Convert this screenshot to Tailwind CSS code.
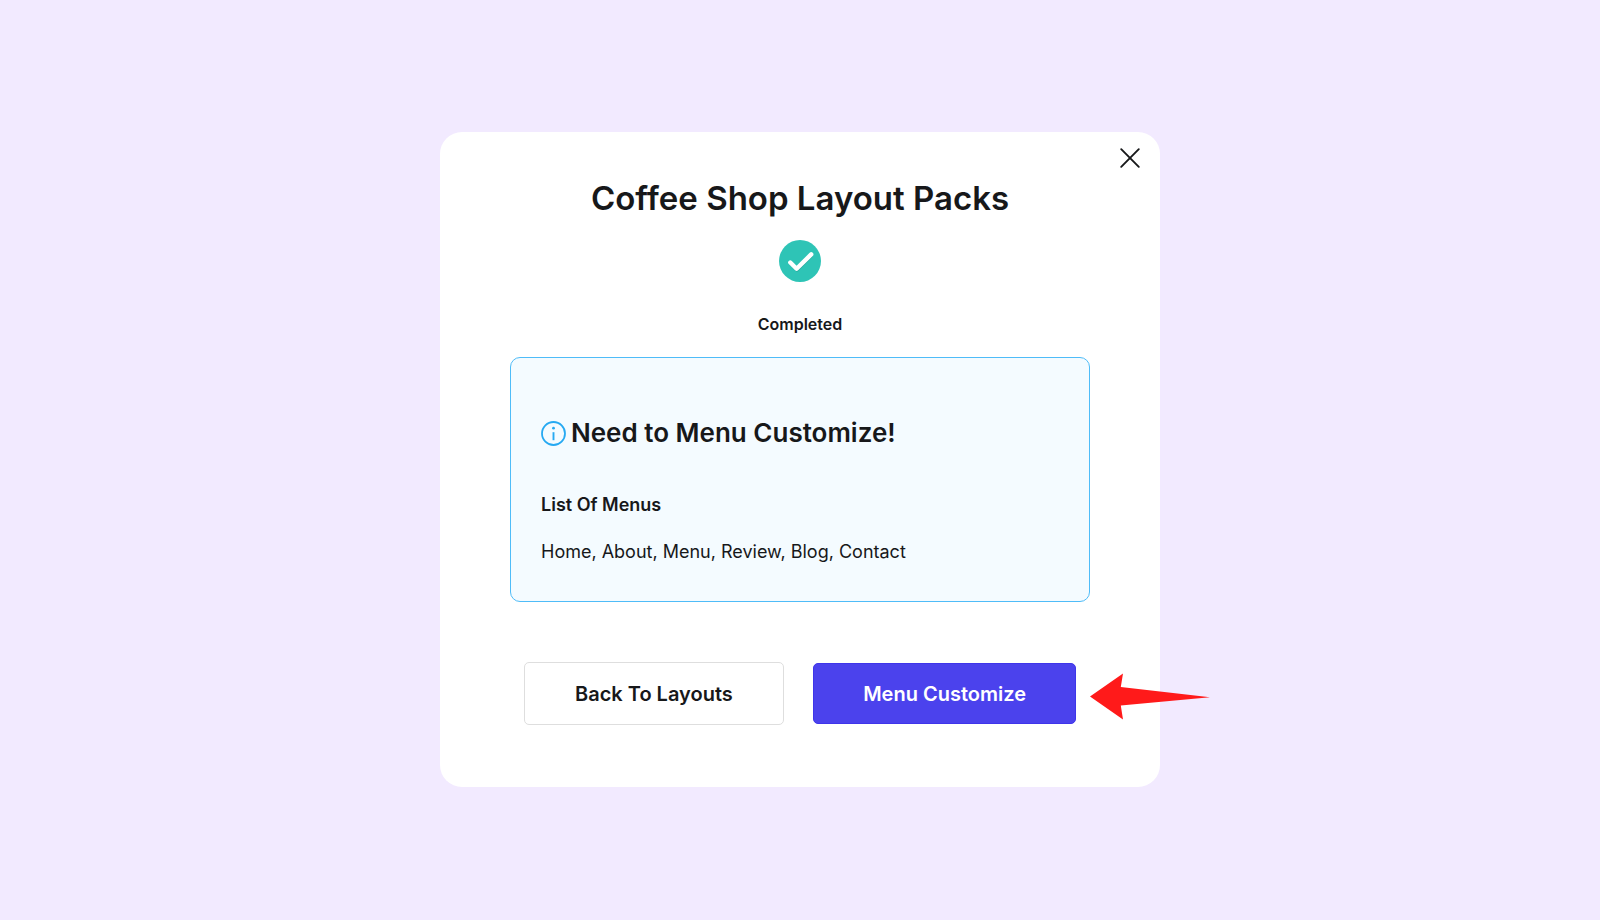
<!DOCTYPE html>
<html lang="en">
<head>
<meta charset="utf-8">
<meta name="viewport" content="width=device-width, initial-scale=1">
<title>Coffee Shop Layout Packs</title>
<script src="https://cdn.jsdelivr.net/npm/@tailwindcss/browser@4"></script>
</head>
<body class="flex min-h-screen items-center justify-center bg-[#f2eaff] pb-px font-[Inter,sans-serif] text-[#17181a]">
<main role="dialog" aria-labelledby="title" class="relative flex w-full max-w-[720px] flex-col items-center rounded-[22px] bg-white px-4 pt-[46px] pb-[62px] sm:px-[70px]">
  <button type="button" aria-label="Close" class="absolute top-[14px] right-[18px] p-px">
    <svg class="size-[22px]" viewBox="0 0 22 22" fill="none" stroke="#17181a" stroke-width="1.9" stroke-linecap="round"><path d="M2.2 2.2 19.8 19.8M19.8 2.2 2.2 19.8"/></svg>
  </button>
  <h1 id="title" class="text-center text-[33px] leading-10 font-semibold">Coffee Shop Layout Packs</h1>
  <svg class="mt-[22px] size-[42px]" viewBox="0 0 42 42" fill="none"><circle cx="21" cy="21" r="21" fill="#2ec4b6"/><path d="M11.8 23.2 18 29.6 32 15.6" stroke="#27a99d" stroke-width="4" stroke-linecap="round" stroke-linejoin="round"/><path d="M11.3 22.5 17.6 28.7 32.2 14.4" stroke="#fff" stroke-width="4.4" stroke-linecap="round" stroke-linejoin="round"/></svg>
  <p class="mt-[30px] text-base leading-6 font-semibold">Completed</p>
  <section class="mt-[21px] w-full rounded-[10px] border border-[#4fbcf8] bg-[#f4fbff] px-[30px] pt-[59px] pb-[37px]">
    <h2 class="flex items-center gap-[5px] text-[26px] leading-8 font-semibold">
      <svg class="size-[25px] shrink-0" viewBox="0 0 25 25" fill="none" stroke="#26a9f2"><circle cx="12.5" cy="12.5" r="11.5" stroke-width="1.8"/><path d="M12.5 11.2v8" stroke-width="1.9"/><circle cx="12.5" cy="7.2" r="1.4" fill="#26a9f2" stroke="none"/></svg>
      Need to Menu Customize!
    </h2>
    <h3 class="mt-[44px] text-lg leading-6 font-semibold">List Of Menus</h3>
    <p class="mt-[23px] text-lg leading-6">Home, About, Menu, Review, Blog, Contact</p>
  </section>
  <div class="mt-[60px] flex w-full items-center justify-between px-[14px] text-xl font-semibold">
    <button type="button" class="h-[63px] rounded-[5px] border border-[#dedede] px-[50px]">Back To Layouts</button>
    <div class="relative">
      <button type="button" class="h-[61px] rounded-[5px] border border-[#3f35ea] bg-[#4b42ed] px-[49px] text-white">Menu Customize</button>
      <svg class="absolute top-[10px] left-full ml-[14px] h-[47px] w-[120px]" viewBox="0 0 120 47" fill="#ff1a1a" aria-hidden="true"><path d="M0 23.4 33 0.5 30.8 14 120 24.2 30.8 32.5 33 46.6Z"/></svg>
    </div>
  </div>
</main>
</body>
</html>
